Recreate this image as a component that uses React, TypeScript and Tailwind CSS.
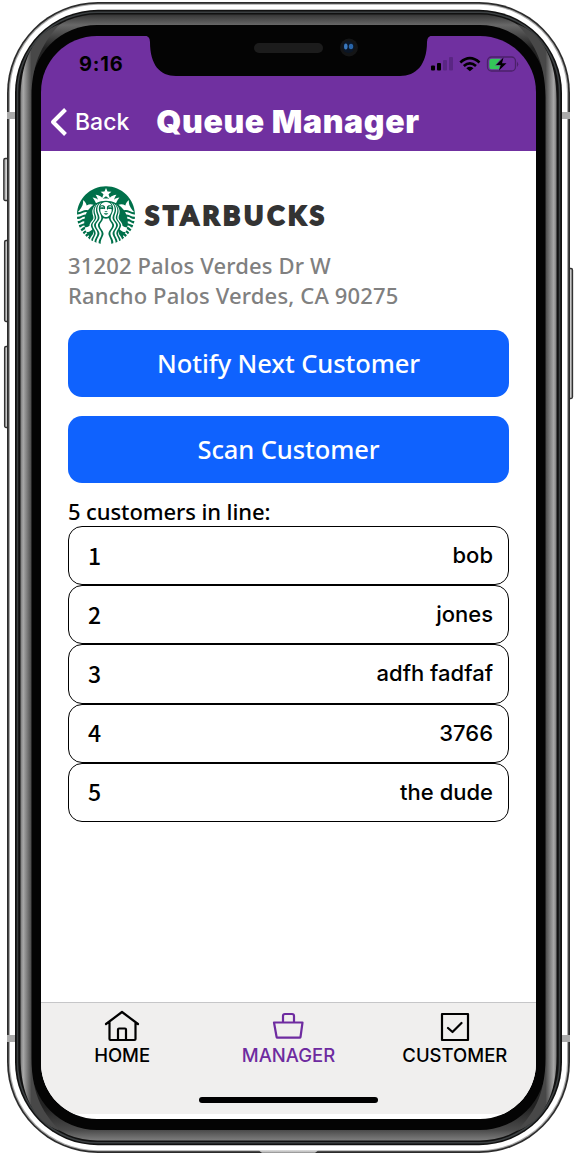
import type { ReactNode } from "react";
import { SiStarbucks } from "react-icons/si";

const customers = ["bob", "jones", "adfh fadfaf", "3766", "the dude"];

function PhoneFrame() {
  return (
    <svg className="absolute inset-0" width="574" height="1158" viewBox="0 0 574 1158" fill="none">
      <defs>
        <linearGradient id="rim" x1="0" x2="0" y1="14" y2="1141" gradientUnits="userSpaceOnUse">
          <stop offset="0" stopColor="#333" />
          <stop offset="0.0098" stopColor="#686868" />
          <stop offset="0.03" stopColor="#222" />
          <stop offset="0.97" stopColor="#222" />
          <stop offset="0.9902" stopColor="#4a4a4a" />
          <stop offset="1" stopColor="#808080" />
        </linearGradient>
        <linearGradient id="shine" x1="20.5" x2="31.5" y1="0" y2="0" gradientUnits="userSpaceOnUse">
          <stop offset="0" stopColor="#777" />
          <stop offset="0.25" stopColor="#a8a8a8" />
          <stop offset="0.6" stopColor="#7c7c7c" />
          <stop offset="1" stopColor="#484848" />
        </linearGradient>
        <linearGradient id="key" x1="0" x2="1" y1="0" y2="0">
          <stop offset="0" stopColor="#888" />
          <stop offset="0.5" stopColor="#ddd" />
          <stop offset="1" stopColor="#777" />
        </linearGradient>
        <linearGradient id="port" x1="0" x2="0" y1="0" y2="1">
          <stop offset="0" stopColor="#eee" />
          <stop offset="1" stopColor="#888" />
        </linearGradient>
        <path id="crescent" d="M60 24C33 34 20.500 62 20.500 100V1056C20.500 1094 33 1121 60 1131C45 1115 31.500 1097 31.500 1058V97C31.500 61 45 40 60 24Z" />
      </defs>
      <g fill="url(#key)" stroke="#333" strokeWidth="1.300">
        <rect x="3.800" y="158.500" width="6" height="42" rx="1.500" />
        <rect x="4.600" y="240.500" width="5" height="81" rx="1.500" />
        <rect x="4.600" y="346.500" width="5" height="81" rx="1.500" />
        <rect x="567.500" y="268.500" width="5" height="130" rx="1.500" />
      </g>
      <rect x="7" y="2" width="563" height="1151" rx="91" fill="#2c2c2c" />
      <rect x="8.800" y="3.800" width="559.400" height="1147.400" rx="89" fill="#aaa" />
      <rect x="10" y="4.800" width="557" height="1145.400" rx="88" fill="#fff" />
      <path d="M259 1150.500H318L315 1153H262Z" fill="url(#port)" />
      <path d="M7 112h8v7H7zM7 1035h8v7H7zM562 112h8v7h-8zM562 1035h8v7h-8z" fill="#aaa" />
      <rect x="15" y="9.800" width="547" height="1135.400" rx="83" fill="#111" />
      <rect x="17.500" y="12.200" width="542" height="1130.600" rx="80" stroke="#3c4042" strokeWidth="1.500" />
      <rect x="20.500" y="14.500" width="536" height="1126" rx="77" fill="url(#rim)" />
      <rect x="31" y="25" width="515" height="1105" rx="66" fill="#040404" />
      <use href="#crescent" fill="url(#shine)" />
      <use href="#crescent" fill="url(#shine)" transform="translate(577 0) scale(-1 1)" />
    </svg>
  );
}

function Notch() {
  return (
    <svg className="absolute left-[140px] top-[34px]" width="296" height="43" viewBox="140 34 296 43">
      <path d="M140 34H436V35.5H433Q427 35.5 427 42C427 65 416 76 400 76H176C160 76 150 65 150 42Q150 35.5 144 35.5H140Z" fill="#040404" />
      <rect x="254" y="43" width="69" height="10" rx="5" fill="#1c1c1c" />
      <circle cx="349" cy="47.5" r="9" fill="#141516" />
      <circle cx="348.5" cy="47" r="6" fill="#0b1626" />
      <ellipse cx="345.800" cy="46.500" rx="1.800" ry="3" fill="#3a78bd" />
      <ellipse cx="351" cy="46.500" rx="2.200" ry="2.700" fill="#2864a8" />
    </svg>
  );
}

function StatusIcons() {
  return (
    <svg className="ml-auto" width="90" height="18" viewBox="0 0 90 18" fill="none">
      <rect x="2" y="10.5" width="4" height="5" rx="1" fill="#000" />
      <rect x="8" y="8" width="4" height="7.5" rx="1" fill="#000" />
      <rect x="14" y="5" width="4" height="10.500" rx="1" fill="#5a2683" />
      <rect x="20" y="2" width="4" height="13.500" rx="1" fill="#5a2683" />
      <path d="M31.300 7.400Q40.900-1 50.500 7.400M34.800 11Q40.900 5.800 47 11" stroke="#000" strokeWidth="2.700" />
      <path d="M37.300 13.200Q40.900 10.400 44.500 13.200L40.900 16.300Z" fill="#000" />
      <rect x="58.500" y="2" width="28" height="14" rx="4" stroke="#4b2169" strokeWidth="1.300" />
      <path d="M88 6.500V12Q90.500 9.300 88 6.500Z" fill="#4b2169" />
      <path d="M62.500 3.800H72L66 10.500H71L70 14.200H62.500Q60.300 14.200 60.300 12V6Q60.300 3.800 62.500 3.800Z" fill="#34c759" />
      <path d="M74.500 2.500L67 10H71.700L70 15.500L77.500 8.200H73Z" fill="#000" />
    </svg>
  );
}

function Tab({ label, active, children }: { label: string; active?: boolean; children: ReactNode }) {
  return (
    <div className={`flex flex-1 flex-col items-center ${active ? "text-[#6e2ba0]" : "text-black"}`}>
      <svg width="36" height="36" viewBox="0 0 36 36" fill="none" stroke="currentColor" strokeWidth="2.2" strokeLinecap="round" strokeLinejoin="round">
        {children}
      </svg>
      <span className="text-[18.5px] leading-[22px] font-medium">{label}</span>
    </div>
  );
}

function ActionButton({ children }: { children: ReactNode }) {
  return (
    <button className="h-[67px] w-full rounded-[14px] bg-[#0f62fe] font-['Noto_Sans',sans-serif] text-[25.5px] font-medium tracking-[-0.1px] text-white">
      {children}
    </button>
  );
}

export default function App() {
  return (
    <div className="relative h-[1158px] w-[574px] overflow-hidden bg-white pt-[35.5px] pl-[41px] font-['Inter',sans-serif] text-black">
      <PhoneFrame />
      <div className="relative flex h-[1083px] w-[495px] flex-col overflow-hidden rounded-[56px]">
        <header className="h-[115.5px] shrink-0 bg-[#7030a0]">
          <div className="flex h-[57px] items-center pr-[17px] pl-[38px]">
            <span className="text-[20px] font-bold tracking-[0.8px]">9:16</span>
            <StatusIcons />
          </div>
          <div className="flex h-[59px] items-center pl-[9px] text-white">
            <svg width="18" height="30" viewBox="0 0 18 30" fill="none" stroke="#fff" strokeWidth="4" strokeLinejoin="round">
              <path d="M15.500 2.500L3 15L15.500 27.500" />
            </svg>
            <span className="ml-[7px] pt-[1px] text-[23px] font-medium">Back</span>
            <h1 className="ml-[27px] text-[32px] font-black tracking-[0.6px] whitespace-nowrap">Queue Manager</h1>
          </div>
        </header>
        <main className="flex-1 bg-white px-[27px] pt-[35px]">
          <div className="flex h-[58px] items-center pl-[9px]">
            <SiStarbucks size={58} color="#00704a" />
            <span className="ml-[10px] font-['Lato',sans-serif] text-[26px] font-black tracking-[3.7px] text-[#333] [-webkit-text-stroke:1.8px_#333]">STARBUCKS</span>
          </div>
          <address className="mt-[6px] font-['Noto_Sans',sans-serif] text-[22px] leading-[30px] font-medium text-[#808080] not-italic">
            <p><span className="tracking-[0.15px]">31202 Palos Verdes Dr W</span></p>
            <p><span className="tracking-[0.15px]">Rancho Palos Verdes, CA 90275</span></p>
          </address>
          <div className="mt-[20px] flex flex-col gap-[19px]">
            <ActionButton>Notify Next Customer</ActionButton>
            <ActionButton>Scan Customer</ActionButton>
          </div>
          <p className="mt-[13px] h-[30px] font-['Noto_Sans',sans-serif] text-[22px] leading-[30px] font-medium tracking-[-0.1px]">5 customers in line:</p>
          <ol>
            {customers.map((name, index) => (
              <li key={name} className="flex h-[59.200px] items-center justify-between rounded-[14px] border-[1.500px] border-black pr-[15px] pl-[19px] text-[22px]">
                <span className="pb-[2px] font-['Noto_Sans_CJK_JP',sans-serif] text-[23px] leading-[30px] font-medium">{index + 1}</span>
                <span className="font-medium">{name}</span>
              </li>
            ))}
          </ol>
        </main>
        <div className="shrink-0 bg-white pb-[5px]">
          <nav className="flex h-[112px] flex-col border-t border-[#c6c6c8] bg-[#f0efee]">
            <div className="-mx-[2px] flex pt-[5px]">
              <Tab label="HOME">
                <path d="M2 16L18 4L34 16M5.500 14V31Q5.500 32 6.500 32H30.500Q31.500 32 31.500 31V14M14 32V21.500Q14 20.500 15 20.500H21Q22 20.500 22 21.500V32" />
              </Tab>
              <Tab label="MANAGER" active>
                <path d="M4 14.500H32.500L30.500 29Q30.400 29.700 29.500 29.700H7.500Q6.700 29.700 6.600 29ZM13 14.500V8Q13 6 15 6H22Q24 6 24 8V14.500" />
              </Tab>
              <Tab label="CUSTOMER">
                <path d="M5 6H31V32H5ZM11 20L15.500 24L24.500 15" />
              </Tab>
            </div>
            <div className="mx-auto mt-[31px] h-[6px] w-[179px] rounded-full bg-black" />
          </nav>
        </div>
      </div>
      <Notch />
    </div>
  );
}
